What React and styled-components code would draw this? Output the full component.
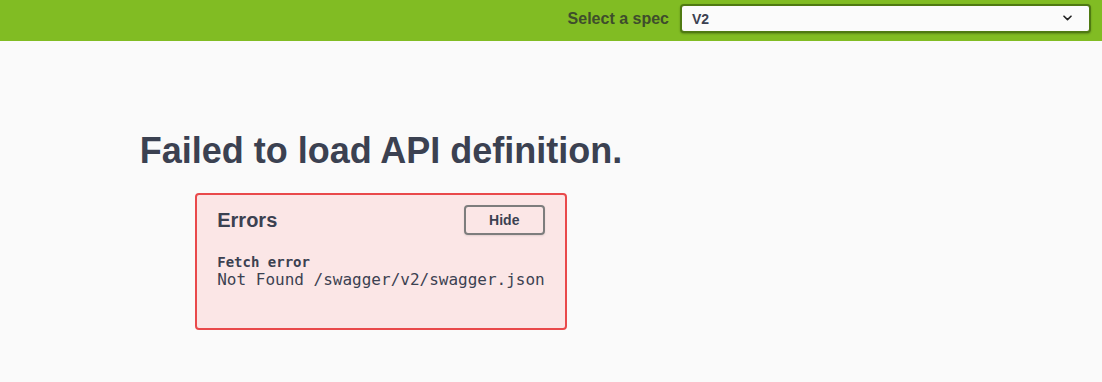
import React, { useState } from "react";
import styled, { createGlobalStyle } from "styled-components";

const GlobalStyle = createGlobalStyle`
  html, body {
    margin: 0;
    padding: 0;
    background: #fafafa;
  }
  body {
    font-family: "Liberation Sans", Arial, sans-serif;
    color: #3b4151;
  }
`;

const Topbar = styled.header`
  height: 41px;
  box-sizing: border-box;
  background: #81bc23;
  display: flex;
  justify-content: flex-end;
  align-items: flex-start;
  padding: 4px 11px 0 0;
`;

const SelectLabel = styled.label`
  display: flex;
  align-items: center;
  gap: 11px;
  font-size: 16px;
  font-weight: 700;
  color: #3e4d2c;
`;

const SelectBox = styled.div`
  width: 411px;
  height: 29px;
  box-sizing: border-box;
  border: 2px solid #4f7a12;
  border-radius: 4px;
  background: #fbfbfb;
  box-shadow: 0 1px 2px rgba(0, 0, 0, 0.25);
  display: flex;
  align-items: center;
  justify-content: space-between;
  padding: 0 17px 0 10px;
  font-size: 14px;
  font-weight: 700;
  color: #3b4151;
`;

const Chevron = () => (
  <svg width="9" height="6" viewBox="0 0 9 6" fill="none" style={{ marginTop: -1 }}>
    <path d="M1 1.2l3.5 3.4 3.5-3.4" stroke="#222" strokeWidth="1.6" strokeLinecap="round" strokeLinejoin="round" />
  </svg>
);

const Wrapper = styled.main`
  width: 722px;
  padding: 0 20px;
`;

const LoadingContainer = styled.div`
  display: flex;
  flex-direction: column;
  align-items: center;
  padding: 88px 0 40px;
`;

const Title = styled.h4`
  margin: 0;
  font-size: 36px;
  font-weight: 700;
  line-height: 44px;
  color: #3b4151;
`;

const ErrorsWrapper = styled.section`
  margin-top: 20px;
  background: #fbe6e6;
  border: 2px solid #e9494b;
  border-radius: 4px;
  padding: 10px 20px 39px;
`;

const HeaderGroup = styled.div`
  display: flex;
  justify-content: space-between;
  align-items: center;
`;

const ErrorsTitle = styled.h4`
  margin: 0;
  font-size: 20px;
  font-weight: 700;
  color: #3b4151;
`;

const HideButton = styled.button`
  width: 81px;
  height: 30px;
  box-sizing: border-box;
  border: 2px solid #7d7d7d;
  border-radius: 4px;
  background: transparent;
  box-shadow: 0 1px 2px rgba(0, 0, 0, 0.1);
  font-family: "Liberation Sans", Arial, sans-serif;
  font-size: 14px;
  font-weight: 700;
  color: #3b4151;
  cursor: pointer;
`;

const ErrorItem = styled.div`
  margin-top: 19px;
  font-family: "DejaVu Sans Mono", monospace;
  color: #3b4151;
`;

const ErrorName = styled.h5`
  margin: 0;
  font-size: 14px;
  font-weight: 700;
  line-height: 17px;
`;

const ErrorMessage = styled.div`
  font-size: 16px;
  line-height: 18px;
`;

const App = () => {
  const [open, setOpen] = useState(true);

  return (
    <>
      <GlobalStyle />
      <Topbar>
        <SelectLabel>
          Select a spec
          <SelectBox>
            <span>V2</span>
            <Chevron />
          </SelectBox>
        </SelectLabel>
      </Topbar>
      <Wrapper>
        <LoadingContainer>
          <Title>Failed to load API definition.</Title>
          <ErrorsWrapper>
            <HeaderGroup>
              <ErrorsTitle>Errors</ErrorsTitle>
              <HideButton onClick={() => setOpen(!open)}>Hide</HideButton>
            </HeaderGroup>
            <ErrorItem>
              <ErrorName>Fetch error</ErrorName>
              <ErrorMessage>Not Found /swagger/v2/swagger.json</ErrorMessage>
            </ErrorItem>
          </ErrorsWrapper>
        </LoadingContainer>
      </Wrapper>
    </>
  );
};

export default App;
